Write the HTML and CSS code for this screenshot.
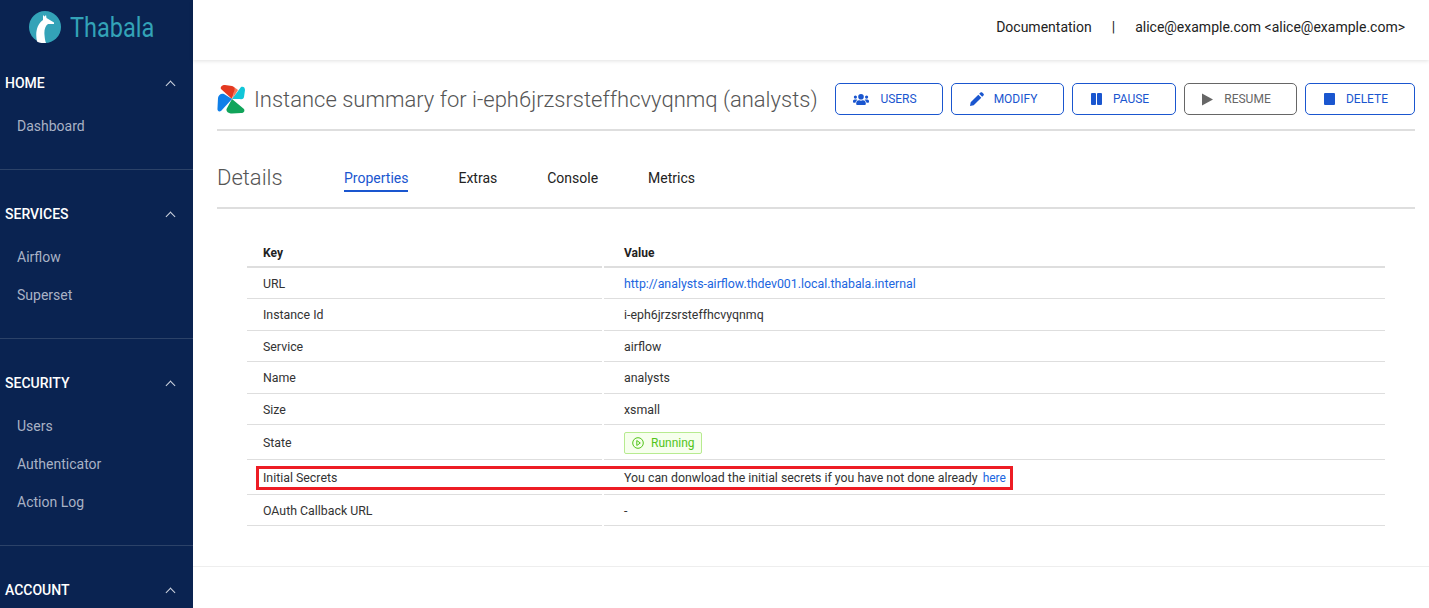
FILE: index.html
```html
<!DOCTYPE html>
<html lang="en">
<head>
    <meta charset="UTF-8">
    <title>Thabala</title>
    <link rel="stylesheet" href="styles.css">
</head>
<body>
    <aside class="sidebar">
        <div class="brand">
            <svg class="brand-icon" width="32" height="32" viewBox="0 0 32 32">
                <circle cx="16" cy="16" r="16" fill="#33a3b8"/>
                <path d="M8 30.500C6 22 8 13 14 9L14 4L15.500 5.500L17 4L17.500 7L25 11.500L25 13L19 13C16 15 15 20 15.500 24C15.800 27 16 30 17 31.900C13.500 32.300 10 32 8 30.500Z" fill="#fff"/>
            </svg>
            <span class="brand-name">Thabala</span>
        </div>
        <section class="nav-group">
            <div class="nav-head">HOME <span class="chevron"></span></div>
            <a class="nav-link">Dashboard</a>
        </section>
        <section class="nav-group">
            <div class="nav-head">SERVICES <span class="chevron"></span></div>
            <a class="nav-link">Airflow</a>
            <a class="nav-link">Superset</a>
        </section>
        <section class="nav-group">
            <div class="nav-head">SECURITY <span class="chevron"></span></div>
            <a class="nav-link">Users</a>
            <a class="nav-link">Authenticator</a>
            <a class="nav-link">Action Log</a>
        </section>
        <section class="nav-group">
            <div class="nav-head">ACCOUNT <span class="chevron"></span></div>
        </section>
    </aside>

    <div class="main">
        <header class="topbar">
            <a class="top-link">Documentation</a>
            <span class="top-sep">|</span>
            <span class="top-user">alice@example.com &lt;alice@example.com&gt;</span>
        </header>

        <div class="content">
            <div class="title-row">
                <svg class="service-icon" width="30" height="30" viewBox="0 0 30 30">
                    <path d="M17 3L21 6L16 14Z" fill="#f47a5b"/>
                    <path d="M15 15L4 5C3 3 5 1 8 1L15 2C17 2.500 18 4 17.500 6Z" fill="#e43921"/>
                    <path d="M15 15L24 3C26 2 28 3 28 6L27 13C26.500 15 25 15.500 23 15Z" fill="#11c6d8"/>
                    <path d="M15 15L27 25C28 27 27 29 24 29L15 29.500C12 29.500 9 28 9.500 25Z" fill="#11a45a"/>
                    <path d="M15 15L4 27C2 28 0 27 .5 24L1 14C1.500 11 4 9 7 10Z" fill="#0f7fe8"/>
                </svg>
                <h1 class="title">Instance summary for i-eph6jrzsrsteffhcvyqnmq (analysts)</h1>
                <div class="actions">
                    <button class="btn btn-users">
                        <svg width="16" height="13" viewBox="0 0 640 512"><path fill="currentColor" d="M96 224a64 64 0 1 0 0-128 64 64 0 0 0 0 128zm448 0a64 64 0 1 0 0-128 64 64 0 0 0 0 128zm32 32h-64c-17.600 0-33.500 7.100-45.100 18.600 40.300 22.100 68.900 62 75.100 109.400h66c17.700 0 32-14.300 32-32v-32c0-35.300-28.700-64-64-64zm-256 0a112 112 0 1 0 0-224 112 112 0 0 0 0 224zm76.800 32h-8.300c-20.800 10-43.900 16-68.500 16s-47.600-6-68.500-16h-8.300C179.600 288 128 339.600 128 403.200V432c0 26.500 21.500 48 48 48h288c26.500 0 48-21.500 48-48v-28.800c0-63.600-51.600-115.200-115.200-115.200zm-223.700-13.400C161.500 263.100 145.600 256 128 256H64c-35.300 0-64 28.700-64 64v32c0 17.700 14.300 32 32 32h65.900c6.300-47.400 34.900-87.300 75.200-109.400z"/></svg>
                        USERS
                    </button>
                    <button class="btn btn-modify">
                        <svg width="14" height="14" viewBox="0 0 14 14"><path fill="currentColor" d="M0 14l.700-3.700L8.300 2.700l3 3-7.600 7.600L0 14zM9.200 1.800L10.500.500c.5-.5 1.200-.5 1.700 0l1.300 1.300c.5.500.5 1.200 0 1.700l-1.300 1.300-3-3z"/></svg>
                        MODIFY
                    </button>
                    <button class="btn btn-pause">
                        <svg width="11" height="12" viewBox="0 0 11 12"><rect width="5" height="12" rx="1" fill="currentColor"/><rect x="6" width="5" height="12" rx="1" fill="currentColor"/></svg>
                        PAUSE
                    </button>
                    <button class="btn btn-resume">
                        <svg width="11" height="13" viewBox="0 0 11 13"><path fill="currentColor" d="M0 .500v12L11 6.500z"/></svg>
                        RESUME
                    </button>
                    <button class="btn btn-delete">
                        <svg width="11" height="12" viewBox="0 0 11 12"><rect width="11" height="12" rx="1" fill="currentColor"/></svg>
                        DELETE
                    </button>
                </div>
            </div>

            <div class="tabs-row">
                <h2 class="details">Details</h2>
                <nav class="tabs">
                    <a class="tab tab-active">Properties</a>
                    <a class="tab">Extras</a>
                    <a class="tab">Console</a>
                    <a class="tab">Metrics</a>
                </nav>
            </div>

            <div class="table-wrap">
                <table class="props">
                    <thead>
                        <tr><th class="col-key">Key</th><th>Value</th></tr>
                    </thead>
                    <tbody>
                        <tr><td>URL</td><td><a class="link">http://analysts-airflow.thdev001.local.thabala.internal</a></td></tr>
                        <tr><td>Instance Id</td><td>i-eph6jrzsrsteffhcvyqnmq</td></tr>
                        <tr><td>Service</td><td>airflow</td></tr>
                        <tr><td>Name</td><td>analysts</td></tr>
                        <tr><td>Size</td><td>xsmall</td></tr>
                        <tr class="row-state">
                            <td>State</td>
                            <td>
                                <span class="badge">
                                    <svg width="12" height="12" viewBox="0 0 12 12"><circle cx="6" cy="6" r="5.300" fill="none" stroke="currentColor"/><path d="M4.800 3.500v5L8.300 6z" fill="none" stroke="currentColor"/></svg>
                                    Running
                                </span>
                            </td>
                        </tr>
                        <tr class="row-secrets">
                            <td>Initial Secrets</td>
                            <td>You can donwload the initial secrets if you have not done already <a class="link here">here</a></td>
                        </tr>
                        <tr class="row-last"><td>OAuth Callback URL</td><td>-</td></tr>
                    </tbody>
                </table>
                <div class="highlight"></div>
            </div>
            <div class="footer-line"></div>
        </div>
    </div>
</body>
</html>
```

FILE: styles.css
```css
* {
    box-sizing: border-box;
}

html, body {
    height: 100%;
}

body {
    margin: 0;
    display: flex;
    height: 608px;
    overflow: hidden;
    background: #fff;
    color: #333;
    font-family: Roboto, "Liberation Sans", sans-serif;
    font-size: 13px;
}

/* sidebar */
.sidebar {
    width: 193px;
    flex-shrink: 0;
    background: #0a2351;
    overflow: hidden;
}

.brand {
    height: 60px;
    display: flex;
    align-items: center;
    padding: 0 0 6px 29px;
}

.brand-name {
    margin-left: 9px;
    color: #33a3b8;
    font-size: 28px;
    transform: scaleX(.84);
    transform-origin: left center;
}

.nav-group {
    padding-bottom: 24px;
    margin-bottom: 21px;
    border-bottom: 1px solid #2c4268;
}

.nav-group:last-child {
    border-bottom: 0;
    padding-bottom: 0;
    margin-bottom: 0;
}

.nav-head {
    display: flex;
    justify-content: space-between;
    align-items: center;
    height: 46px;
    padding: 0 19px 0 5px;
    margin-bottom: 1px;
    color: #fff;
    font-size: 14px;
    font-weight: 500;
}

.chevron {
    width: 7px;
    height: 7px;
    margin-top: 4px;
    border-top: 1px solid #cfd5e0;
    border-left: 1px solid #cfd5e0;
    transform: rotate(45deg);
}

.nav-link {
    display: block;
    height: 38px;
    line-height: 38px;
    padding-left: 17px;
    color: #a9b2c5;
    font-size: 14px;
}

/* top bar */
.main {
    flex: 1;
    min-width: 0;
}

.topbar {
    height: 60px;
    display: flex;
    justify-content: flex-end;
    align-items: center;
    gap: 20px;
    padding: 0 24px 6px 0;
    box-shadow: 0 1px 4px rgba(0, 0, 0, .12);
    color: #222;
    font-size: 14px;
}

/* page */
.content {
    padding: 23px 14px 0 24px;
}

.title-row {
    display: flex;
    align-items: center;
    height: 48px;
    padding-bottom: 14px;
    border-bottom: 2px solid #dedede;
}

.service-icon {
    margin-right: 7px;
    flex-shrink: 0;
}

.title {
    margin: 0;
    color: #555;
    font-size: 22px;
    font-weight: 300;
    white-space: nowrap;
}

.actions {
    display: flex;
    gap: 8px;
    margin-left: auto;
}

.btn {
    display: flex;
    align-items: center;
    height: 32px;
    gap: 11px;
    border: 1px solid #1a56cf;
    border-radius: 5px;
    background: #fff;
    color: #1a56cf;
    font-family: inherit;
    font-size: 12px;
    padding: 0 8px 0 0;
    justify-content: center;
}

.btn-users { width: 108px; }
.btn-modify { width: 113px; gap: 10px; }
.btn-pause { width: 104px; }
.btn-delete { width: 110px; }

.btn-resume {
    width: 113px;
    border-color: #666;
    color: #666;
}

.tabs-row {
    display: flex;
    align-items: center;
    height: 78px;
    padding-top: 18px;
    border-bottom: 2px solid #dedede;
}

.details {
    width: 127px;
    margin: -2px 0 0;
    color: #555;
    font-size: 22px;
    font-weight: 300;
}

.tabs {
    display: flex;
    gap: 50px;
    margin-top: 3px;
    color: #222;
    font-size: 14px;
}

.tab {
    padding: 2px 0 4px;
    border-bottom: 2px solid transparent;
}

.tab-active {
    color: #1a56cf;
    border-bottom-color: #1a56cf;
}

/* table */
.table-wrap {
    position: relative;
    margin: 29px 28px 0;
}

.props {
    width: 100%;
    border-collapse: separate;
    border-spacing: 2px 0;
}

.props th {
    height: 29.500px;
    padding: 3px 16px 0;
    text-align: left;
    font-size: 12px;
    font-weight: 700;
    color: #222;
    border-bottom: 2px solid #dedede;
}

.props .col-key {
    width: 355px;
}

.props td {
    height: 31.500px;
    padding: 2px 20px 0 16px;
    border-bottom: 1px solid #dedede;
    font-size: 12.350px;
    color: #333;
}

.props td + td, .props th + th {
    padding-left: 20px;
}

.props .row-state td, .props .row-secrets td {
    height: 35px;
}

.props .row-last td {
    height: 31px;
}

.link {
    color: #2166e0;
}

.here {
    margin-left: 2px;
    font-size: 12px;
}

.badge {
    display: inline-flex;
    align-items: center;
    gap: 7px;
    height: 22px;
    padding: 0 6px 0 7px;
    border: 1px solid #b7eb8f;
    border-radius: 2px;
    background: #f6ffed;
    color: #52c41a;
    font-size: 12px;
}

/* red annotation box */
.highlight {
    position: absolute;
    left: 11px;
    top: 228px;
    width: 757px;
    height: 24px;
    border: 3px solid #ed1c24;
}

.footer-line {
    margin: 40px -14px 0 -24px;
    border-top: 1px solid #eee;
}
```
